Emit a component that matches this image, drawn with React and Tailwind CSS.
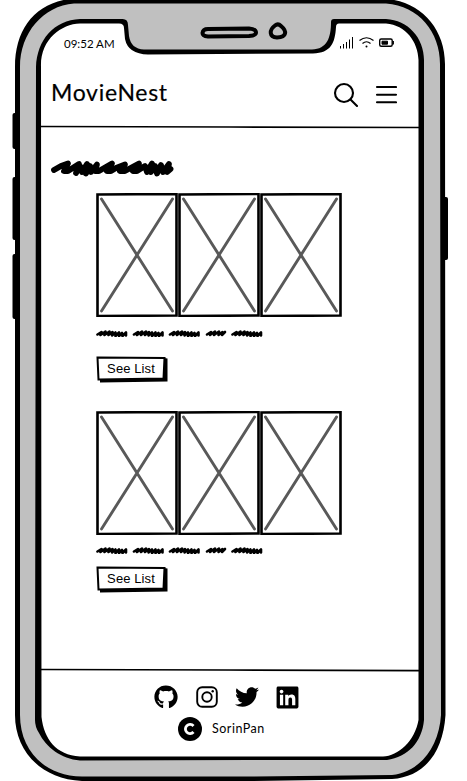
import React from "react";
import { FaGithub, FaTwitter, FaLinkedin } from "react-icons/fa";

function PhoneFrame() {
  return (
    <svg className="absolute inset-0 h-[781px] w-[467px]" viewBox="0 0 467 781" fill="none">
      <g fill="#000">
        <rect x="12.5" y="113" width="10" height="36" rx="2" />
        <rect x="12.5" y="177" width="10" height="63" rx="2" />
        <rect x="12.5" y="254" width="10" height="65" rx="2" />
        <rect x="438" y="197" width="10" height="63" rx="2" />
        <path d="M15 67C15 30 34 4 69 -1H386C420 1 445 28 445 64L445.500 715C443 753 424 777 392 779L250 781H82C40 779 15 750 15 715Z" />
      </g>
      <path fill="#c0c0c0" d="M20 67C20 33 43 6 74 3.5H386C419 6 440 32 440 64L441 715C439 747 420 772 392 775L250 776.5H82C44 776 20 750 20 715Z" />
      <path fill="#000" d="M36 67C37 40 54 20 80 19H121Q128 18 128 25L129 36Q131 49 144 49.5H312C327 49 331 38 331 22Q331 19 334 19H386C408 20 424 38 424 60L424 720C422 742 408 757 387 760H250L80 760.5C61 759 46 747 39 733Q35 727 35 720Z" />
      <path fill="#fff" d="M41 67C40 40 61 24 80 23.5H118Q124 23 124 28L125 39Q128 54 148 54.5L313 53.5C331 53 335 43 336 27Q336 23.500 339 23.500H386C406 25 418 42 418.500 60V720C415 741 398 756 383 756.500H80C56 755 44 739 41.500 717Z" />
      <g stroke="#000" strokeWidth="4">
        <path d="M208 29L249 28.500Q256 29 256 32.500Q256 35.500 249 36L208 36.500Q202.500 36 202.500 33Q203 29 208 29Z" />
        <path d="M275 25.500Q278 23 281 26C287 31 287 37 277 37.500C269 37 269 30 275 25.500Z" />
      </g>
    </svg>
  );
}

function StatusIcons() {
  return (
    <svg className="h-[14px] w-[56px]" viewBox="339 36 56 14" fill="none" stroke="#000">
      <path d="M340.500 46V48.500M343.500 44V48.500M346.500 42V48.500M349.500 39.500V48.500M352.500 37V48.500" />
      <path d="M359.500 40.500Q366.500 35 373.500 40.500M362.500 43.500Q366.500 40 370.500 43.500" strokeWidth="1.200" />
      <circle cx="366.500" cy="46.500" r="1" fill="#000" stroke="none" />
      <rect x="379.700" y="39" width="12.500" height="7.300" rx="1.500" strokeWidth="1.400" />
      <path d="M382 41.200H387.500V44.200H382Z" fill="#000" />
      <path d="M393.200 41V44.500" strokeWidth="1.500" />
    </svg>
  );
}

function Poster() {
  return (
    <svg className="h-[124px] w-[82px]" viewBox="0 0 82 124" fill="none">
      <path d="M1.500 1.500L80.500 1V122.500L1.500 123Z" stroke="#000" strokeWidth="2.600" />
      <path d="M5.500 6L76.500 118M76.500 6L5.500 118" stroke="#595959" strokeWidth="2.900" strokeLinecap="round" />
    </svg>
  );
}

const word = "l4 -2.500l-1 3l5 -3.500l-1 3.500l5 -3.500l-1 3.500l4 -3l-.5 3.500l3.500 -3l0 3.500l3.500 -3.500l0 3.500l3 -3l.5 3l3.500 -3.500l0 3";

function Caption() {
  return (
    <svg className="block h-[8px] w-[170px]" viewBox="0 0 170 8" fill="none" stroke="#000" strokeWidth="2.600" strokeLinecap="round" strokeLinejoin="round">
      <path d={"M1.500 5.500" + word} />
      <path d={"M38 5.500" + word} />
      <path d={"M74 5.500" + word} />
      <path d="M111 5.500l4 -2.500l-1 3l5 -3.500l-1 3.500l5 -3.500l-.5 3.500l4 -3l-.5 3l3 -3" />
      <path d={"M136.500 5.500" + word} />
    </svg>
  );
}

function ListButton() {
  return (
    <button className="relative block h-[27px] w-[72px]">
      <svg className="absolute inset-0 h-[27px] w-[72px]" viewBox="0 0 72 27">
        <path d="M4 5L68 2L71.500 2.500V25.500L4 26.500Z" fill="#000" />
        <path d="M1.500 1.500L68.500 2L67.500 22.500L2.500 23.500Z" fill="#fff" stroke="#000" strokeWidth="2" />
      </svg>
      <span className="relative block pr-[2px] pb-[3px] text-center text-[13px] leading-[21px] tracking-[0.100px]">See List</span>
    </button>
  );
}

function MovieList({ compact }) {
  return (
    <section className="pl-[96px]">
      <div className="flex">
        <Poster />
        <Poster />
        <Poster />
      </div>
      <div className={compact ? "pt-[11px] pb-[12px]" : "pt-[12px] pb-[19px]"}>
        <Caption />
      </div>
      <ListButton />
    </section>
  );
}

export default function App() {
  return (
    <div className="relative h-[781px] w-[467px] overflow-hidden bg-white font-['Liberation_Sans',sans-serif] text-black">
      <PhoneFrame />
      <div className="relative flex h-full flex-col">
        <header className="h-[128px]">
          <div className="flex h-[50px] items-end justify-between pr-[72px] pl-[64px]">
            <span className="font-['Lato',sans-serif] text-[11.500px] leading-[13px]">09:52 AM</span>
            <StatusIcons />
          </div>
          <div className="flex items-start justify-between pt-[26px] pr-[70px] pl-[51px]">
            <h1 className="font-['Lato',sans-serif] text-[23px] leading-[32px] tracking-[0.700px] [-webkit-text-stroke:0.200px_#000]">MovieNest</h1>
            <svg className="mt-[5px] h-[28px] w-[64px]" viewBox="333 81 64 28" fill="none" stroke="#000" strokeWidth="2.100" strokeLinecap="round">
              <circle cx="344" cy="93" r="9" />
              <path d="M350.500 99.500L357 106M377 87H396M377 94.700H396M377 102.300H396" />
            </svg>
          </div>
        </header>
        <svg className="-mt-[3px] h-[4px] w-full" viewBox="0 0 467 4">
          <path d="M40 1.500L230 2L419 2.500" stroke="#000" strokeWidth="1.700" />
        </svg>
        <main className="flex h-[539px] flex-col">
          <svg className="mt-[30px] ml-[50px] h-[20px] w-[126px] shrink-0" viewBox="50 159 126 20" fill="none" stroke="#000" strokeWidth="5.800" strokeLinecap="round" strokeLinejoin="round">
            <path d="M54 170L61 166L68 163.500L64 171L68 171L79 164L76 173L80 166L82 172L87 164L86 173.500L90 166L91 172L97 164.500L95 171L99 171L112 163.500L107 171L111 171L116 168L125 164.500L120 171L125 171L139 163.500L133 171L137 171L145 166L147 172L152 163.500L151 172L155 166L157 173.500L161 165L163 172L169 164L167 172L170.500 169" />
          </svg>
          <div className="mt-[14px] flex flex-col gap-[28px]">
            <MovieList />
            <MovieList compact />
          </div>
        </main>
        <footer>
          <svg className="block h-[4px] w-full" viewBox="0 0 467 4">
            <path d="M41 1.500L230 2L419 2.700" stroke="#000" strokeWidth="1.700" />
          </svg>
          <div className="flex h-[39px] items-center justify-center gap-[16px] pt-[11px] pr-[13px]">
            <FaGithub size={24} />
            <svg className="mx-[0.500px] h-[24px] w-[24px]" viewBox="0 0 24 24" fill="none" stroke="#000" strokeWidth="1.900">
              <rect x="2.200" y="2.200" width="19.600" height="19.600" rx="5" />
              <circle cx="12" cy="12" r="4.700" />
              <circle cx="17.700" cy="6.300" r="1.200" fill="#000" stroke="none" />
            </svg>
            <FaTwitter size={24} />
            <FaLinkedin size={25} />
          </div>
          <div className="flex items-center gap-[10px] pt-[6px] pl-[178px]">
            <svg className="h-[24px] w-[24px]" viewBox="0 0 24 24">
              <circle cx="12" cy="12" r="12" />
              <path d="M15.500 9A4.600 4.600 0 1 0 15.500 15" fill="none" stroke="#fff" strokeWidth="2.800" />
            </svg>
            <span className="pb-px font-['Lato',sans-serif] text-[12.500px] leading-[18px] tracking-[0.500px]">SorinPan</span>
          </div>
        </footer>
      </div>
    </div>
  );
}
